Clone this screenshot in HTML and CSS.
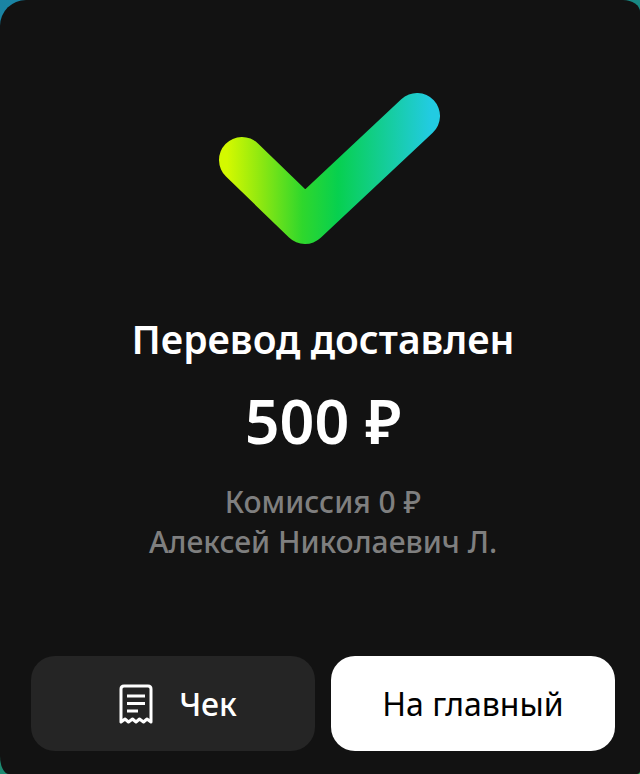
FILE: index.html
```html
<!DOCTYPE html>
<html lang="ru">
<head>
    <meta charset="UTF-8">
    <meta name="viewport" content="width=device-width, initial-scale=1.0">
    <title>Перевод доставлен</title>
    <link rel="stylesheet" href="styles.css">
</head>
<body>

    <main class="card">
        <svg class="check" viewBox="0 0 222 152" aria-hidden="true">
            <defs>
                <linearGradient id="checkFill" gradientUnits="userSpaceOnUse" x1="0" y1="0" x2="222" y2="0">
                    <stop offset="0.04" stop-color="#d4f900"/>
                    <stop offset="0.2" stop-color="#8ae712"/>
                    <stop offset="0.38" stop-color="#2fd72c"/>
                    <stop offset="0.54" stop-color="#07d04f"/>
                    <stop offset="0.76" stop-color="#15cd9b"/>
                    <stop offset="0.96" stop-color="#22cbe2"/>
                </linearGradient>
            </defs>
            <path d="M24 67 L87 128 L199 23" fill="none" stroke="url(#checkFill)" stroke-width="46" stroke-linecap="round" stroke-linejoin="round"/>
        </svg>

        <h1 class="title">Перевод доставлен</h1>
        <p class="amount">500 ₽</p>
        <p class="details">Комиссия 0 ₽<br>Алексей Николаевич Л.</p>

        <div class="actions">
            <button type="button" class="btn btn-dark">
                <svg class="receipt" viewBox="0 0 34 40" fill="none" stroke="currentColor" stroke-width="3" aria-hidden="true">
                    <path d="M2 38 V5 Q2 2 5 2 H29 Q32 2 32 5 V38 L28 35 L24.500 38 L20.500 35 L17 38 L13.500 35 L9.500 38 L6 35 Z" stroke-linejoin="round"/>
                    <path d="M8 12 H26 M8 19.500 H26 M8 27 H19"/>
                </svg>
                <span>Чек</span>
            </button>
            <button type="button" class="btn btn-light">На главный</button>
        </div>
    </main>

</body>
</html>
```
FILE: styles.css
```css
* {
    box-sizing: border-box;
}

body {
    margin: 0;
    font-family: "Noto Sans", "Open Sans", sans-serif;
    background: linear-gradient(150deg, #1a84a5 0%, #178a76 45%, #208a70 75%, #3fbf60 100%);
}

.card {
    display: flex;
    flex-direction: column;
    align-items: center;
    min-height: 100vh;
    padding: 93px 25px 23px 31px;
    background: #121212;
    border-radius: 26px 17px 3px 9px / 26px 12px 3px 18px;
    color: #fff;
    text-align: center;
}

.check {
    width: 222px;
    height: 152px;
    margin-left: 12px;
}

.title {
    margin: 68px 0 0;
    font-size: 39px;
    line-height: 52px;
    font-weight: 600;
}

.amount {
    margin: 16px 0 0;
    font-size: 61px;
    line-height: 80px;
    font-weight: 600;
}

.details {
    margin: 21px 0 0;
    font-size: 30px;
    line-height: 40px;
    font-weight: 500;
    color: #7f7f7f;
}

/* Buttons */
.actions {
    display: grid;
    grid-template-columns: 1fr 1fr;
    gap: 16px;
    width: 100%;
    margin-top: auto;
}

.btn {
    display: flex;
    align-items: center;
    justify-content: center;
    gap: 26px;
    height: 95px;
    padding: 0;
    border: none;
    border-radius: 24px;
    font-family: inherit;
    font-size: 32px;
    cursor: pointer;
}

.btn-dark {
    padding-left: 10px;
    background: #252525;
    color: #fff;
    font-weight: 500;
}

.btn-light {
    background: #fff;
    color: #000;
}

.receipt {
    width: 34px;
    height: 40px;
}
```
